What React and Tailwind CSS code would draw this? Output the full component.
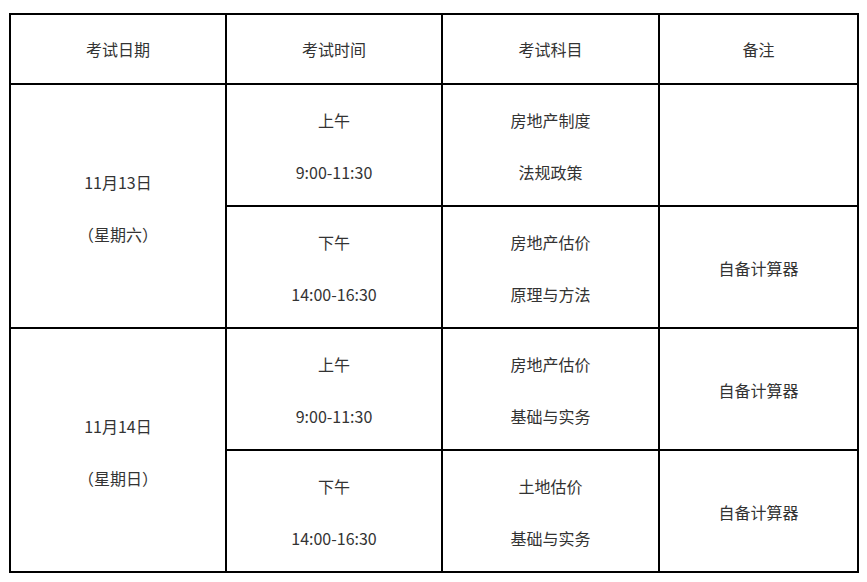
const font = { fontFamily: '"Noto Sans CJK SC", sans-serif' };

const Cell = ({ lines = [], className = '' }) => (
  <div className={`bg-white flex flex-col items-center justify-center gap-[26px] text-[16px] leading-[26px] text-[#333] ${className}`}>
    {lines.map((l, i) => (
      <p key={i}>{l}</p>
    ))}
  </div>
);

export default function App() {
  return (
    <div className="min-h-screen bg-white pt-[13px] pl-[9px]" style={font}>
      <div className="grid w-[850px] grid-cols-[214px_214px_215px_197px] grid-rows-[68px_120px_120px_120px_120px] gap-[2px] bg-black p-[2px]">
        {/* header */}
        <Cell lines={['考试日期']} />
        <Cell lines={['考试时间']} />
        <Cell lines={['考试科目']} />
        <Cell lines={['备注']} />

        {/* 11月13日 */}
        <Cell lines={['11月13日', '（星期六）']} className="row-span-2 pt-1" />
        <Cell lines={['上午', '9:00-11:30']} className="pt-0.5" />
        <Cell lines={['房地产制度', '法规政策']} className="pt-0.5" />
        <Cell />
        <Cell lines={['下午', '14:00-16:30']} className="pt-0.5" />
        <Cell lines={['房地产估价', '原理与方法']} className="pt-0.5" />
        <Cell lines={['自备计算器']} className="pt-0.5" />

        {/* 11月14日 */}
        <Cell lines={['11月14日', '（星期日）']} className="row-span-2 pt-1" />
        <Cell lines={['上午', '9:00-11:30']} className="pt-0.5" />
        <Cell lines={['房地产估价', '基础与实务']} className="pt-0.5" />
        <Cell lines={['自备计算器']} className="pt-0.5" />
        <Cell lines={['下午', '14:00-16:30']} className="pt-0.5" />
        <Cell lines={['土地估价', '基础与实务']} className="pt-0.5" />
        <Cell lines={['自备计算器']} className="pt-0.5" />
      </div>
    </div>
  );
}
